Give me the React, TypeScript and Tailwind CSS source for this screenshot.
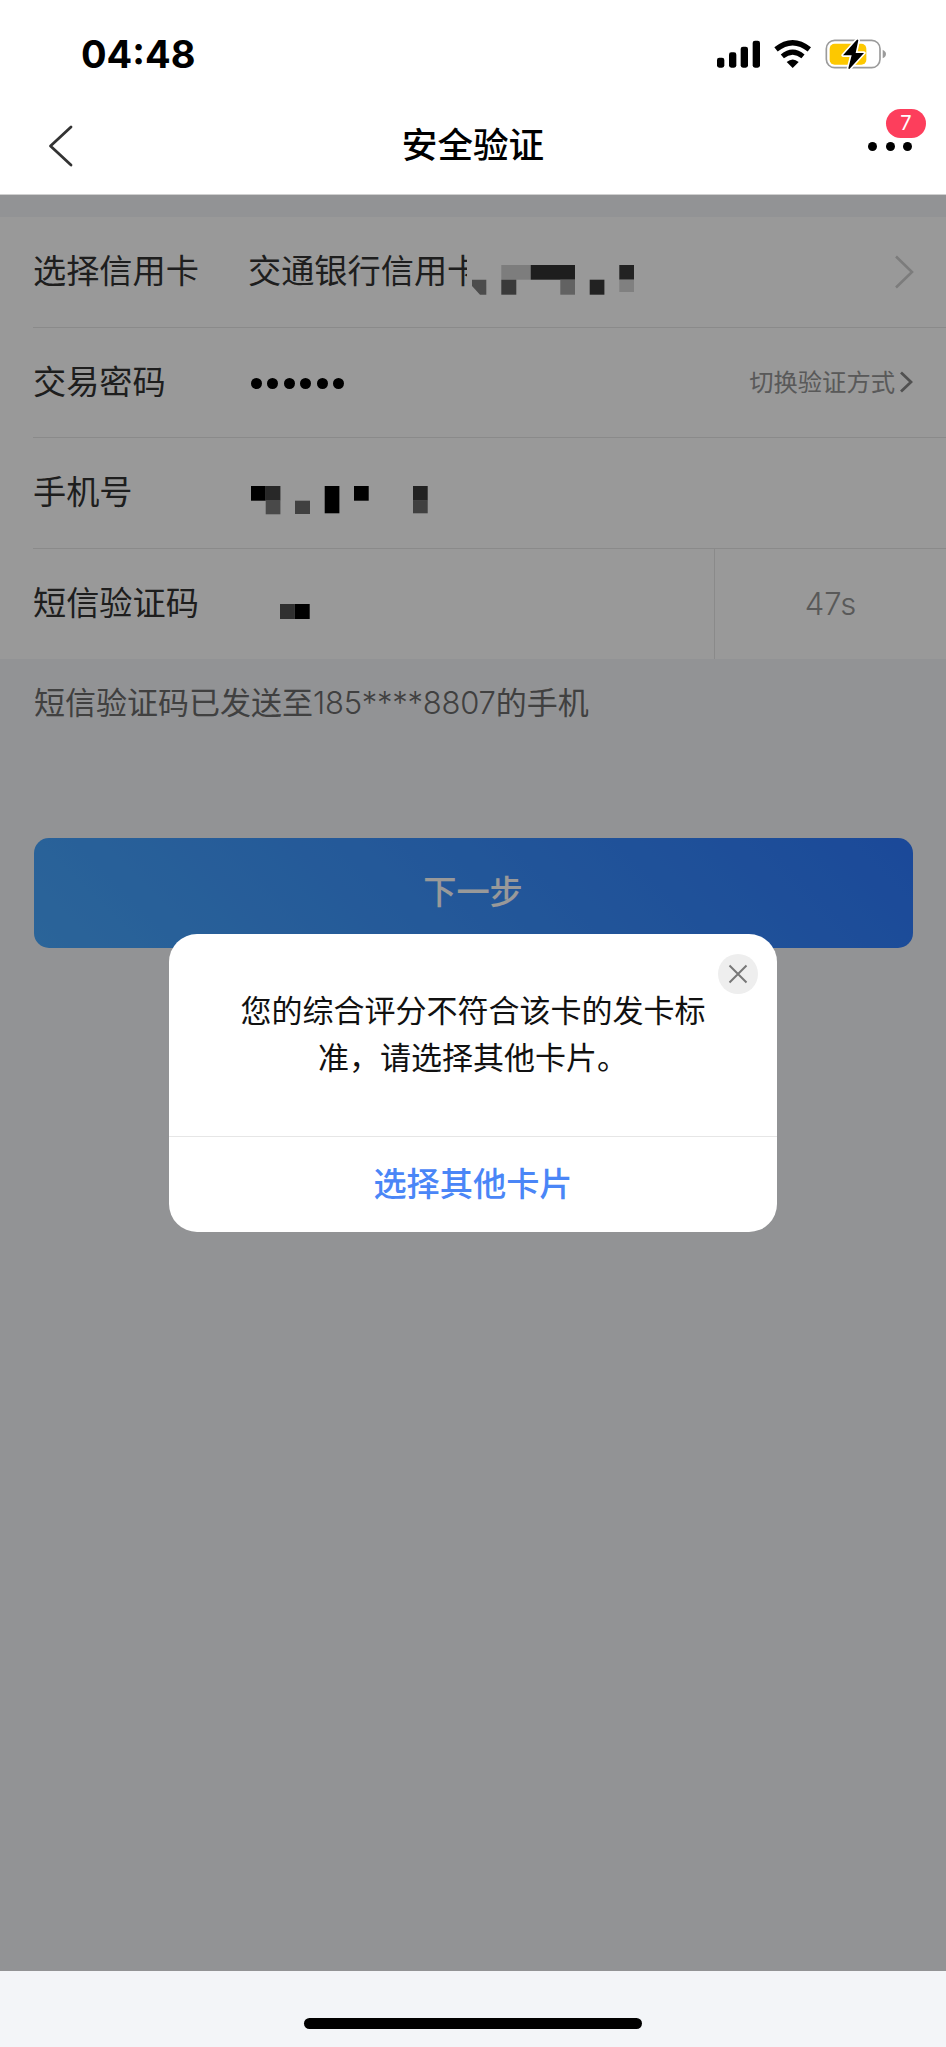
import React from 'react';

interface Cell {
  x: number;
  y: number;
  w: number;
  h: number;
  fill: string;
}

interface RowProps {
  label: string;
  last?: boolean;
  children?: React.ReactNode;
}

// Pixel blocks that hide the private digits of a value
const CARD_CELLS: Cell[] = [
  { x: 29.3, y: 0, w: 29.4, h: 14.7, fill: '#d0d0d0' },
  { x: 58.7, y: 0, w: 44.3, h: 14.7, fill: '#323232' },
  { x: 29.3, y: 14.7, w: 15, h: 15, fill: '#616161' },
  { x: 88.3, y: 14.7, w: 14.7, h: 15, fill: '#a3a3a3' },
  { x: 117.7, y: 14.7, w: 14.7, h: 15, fill: '#393939' },
  { x: 147.3, y: 0, w: 14.7, h: 14.7, fill: '#393939' },
  { x: 147.3, y: 14.7, w: 14.7, h: 12.3, fill: '#d5d5d5' },
];

const PHONE_CELLS: Cell[] = [
  { x: 0, y: 0, w: 14.7, h: 14.7, fill: '#000' },
  { x: 14.7, y: 0, w: 14.7, h: 14.7, fill: '#434343' },
  { x: 14.7, y: 14.7, w: 14.7, h: 13.6, fill: '#7b7b7b' },
  { x: 44, y: 14.7, w: 15, h: 13.3, fill: '#6b6b6b' },
  { x: 73.7, y: 0, w: 14.7, h: 27.3, fill: '#000' },
  { x: 103, y: 0, w: 14.7, h: 14.7, fill: '#000' },
  { x: 162, y: 0, w: 14.7, h: 14.7, fill: '#393939' },
  { x: 162, y: 14.7, w: 14.7, h: 12.6, fill: '#6b6b6b' },
];

const CODE_CELLS: Cell[] = [
  { x: 0, y: 0, w: 14.7, h: 15, fill: '#505050' },
  { x: 14.7, y: 0, w: 15, h: 15, fill: '#000' },
];

const Mosaic: React.FC<{ cells: Cell[]; width: number; height: number; className?: string; children?: React.ReactNode }> = ({
  cells,
  width,
  height,
  className,
  children,
}) => (
  <svg width={width} height={height} viewBox={`0 0 ${width} ${height}`} className={className}>
    {children}
    {cells.map((c, i) => (
      <rect key={i} x={c.x} y={c.y} width={c.w} height={c.h} fill={c.fill} />
    ))}
  </svg>
);

const StatusIcons: React.FC = () => (
  <svg width="170" height="32" viewBox="110 112 510 96">
    {/* Signal */}
    <rect x="110" y="171" width="22" height="30" rx="7" />
    <rect x="146" y="155" width="22" height="46" rx="7" />
    <rect x="181" y="138" width="22" height="63" rx="7" />
    <rect x="217" y="120" width="22" height="81" rx="7" />
    {/* Wifi */}
    <path d="M287 146Q337 106 387 146" fill="none" stroke="#000" strokeWidth="16" />
    <path d="M306 167Q337 142 368 167" fill="none" stroke="#000" strokeWidth="15" />
    <path d="M319 184Q337 169 355 184L337 202Z" />
    {/* Battery */}
    <rect x="438" y="119" width="161" height="82" rx="25" fill="none" stroke="#9b9b9b" strokeWidth="5" />
    <path d="M607 147Q617 152 617 160Q617 168 607 173Z" fill="#9b9b9b" />
    <rect x="448" y="129" width="110" height="63" rx="15" fill="#fdc800" />
    <path
      d="M529 118L488 164H514L504 203Q506 207 510 202L551 157H526L534 119Q532 114 529 118Z"
      stroke="#fff"
      strokeWidth="10"
      paintOrder="stroke"
      strokeLinejoin="round"
    />
  </svg>
);

const Row: React.FC<RowProps> = ({ label, last, children }) => (
  <div className="flex h-[110.5px] pl-[33px]">
    <div className={last ? 'flex flex-1 items-center' : 'flex flex-1 items-center border-b border-[#e6e6e6]'}>
      <span className="w-[216px] shrink-0 text-[33.2px] text-[#333]">{label}</span>
      {children}
    </div>
  </div>
);

const App: React.FC = () => {
  return (
    <div className="flex h-[2047px] w-[946px] flex-col overflow-hidden bg-[#f3f5f8] font-['Inter','Noto_Sans_CJK_SC',sans-serif] leading-none">
      <header className="h-[195px] shrink-0 border-b border-[#d0d0d0] bg-white">
        <div className="flex h-[97px] items-center justify-between pt-[11px] pr-[59px] pl-[81px]">
          <span className="text-[38px] font-bold text-black">04:48</span>
          <StatusIcons />
        </div>
        <div className="flex h-[98px] items-center pr-[33px] pl-[48px]">
          <div className="flex-1">
            <svg width="56" height="42" viewBox="0 0 56 42" fill="none" stroke="#333" strokeWidth="2.8" strokeLinecap="round" strokeLinejoin="round">
              <path d="M23 2L2.5 21L23 40" />
            </svg>
          </div>
          <h1 className="mr-[15px] text-[35.6px] font-medium text-black">安全验证</h1>
          <div className="flex flex-1 justify-end">
            <div className="relative flex w-[45px] items-center gap-[8.5px]">
              <span className="size-[9px] rounded-full bg-black" />
              <span className="size-[9px] rounded-full bg-black" />
              <span className="size-[9px] rounded-full bg-black" />
              <span className="absolute -top-[33px] left-[18px] flex h-[29px] w-10 items-center justify-center rounded-full bg-[#fd3e5c] text-xl text-white">
                7
              </span>
            </div>
          </div>
        </div>
      </header>

      <main className="relative h-[1776px] shrink-0 pt-[22px]">
        <section className="bg-white">
          <Row label="选择信用卡">
            <span className="-ml-px w-[233px] shrink-0 text-[33.2px] whitespace-nowrap text-[#333]">交通银行信用卡</span>
            {/* The white patch runs over the end of the bank name */}
            <Mosaic cells={CARD_CELLS} width={162} height={30} className="relative mt-4 -ml-[9px] overflow-visible">
              <rect x="-5" y="-28" width="20" height="58" fill="#fff" />
              <path d="M0 14.7H14.3V29.7H8L0 21Z" fill="#7f7f7f" />
            </Mosaic>
            <svg width="20" height="34" viewBox="0 0 20 34" className="mr-[32px] ml-auto" fill="none" stroke="#cfcfcf" strokeWidth="2.6">
              <path d="M2 1.5L18 17L2 32.5" />
            </svg>
          </Row>
          <Row label="交易密码">
            <div className="flex gap-[5.5px] pt-[3px] pl-[1.5px]">
              {[0, 1, 2, 3, 4, 5].map((i) => (
                <span key={i} className="size-[11px] rounded-full bg-black" />
              ))}
            </div>
            <div className="mr-[33px] ml-auto flex items-center gap-1 text-[24.3px] text-[#949494]">
              <span>切换验证方式</span>
              <svg width="14" height="22" viewBox="0 0 14 22" fill="none" stroke="#888" strokeWidth="2.8">
                <path d="M2 1.5L12 11L2 20.5" />
              </svg>
            </div>
          </Row>
          <Row label="手机号">
            <Mosaic cells={PHONE_CELLS} width={177} height={30} className="mt-[16px] ml-[1.5px]" />
          </Row>
          <Row label="短信验证码" last>
            <Mosaic cells={CODE_CELLS} width={30} height={15} className="mt-[15px] ml-[31px]" />
            <div className="ml-auto flex h-full w-[232px] items-center justify-center border-l border-[#e6e6e6] text-[31px] font-light text-[#949494]">
              47s
            </div>
          </Row>
        </section>

        <p className="mt-[28px] pl-[34px] text-[31px] leading-[32px] text-[#6b6b6b]">
          短信验证码已发送至<span className="font-light tracking-[-0.25px]">185****8807</span>的手机
        </p>

        <button className="mx-auto mt-[119px] flex h-[110px] w-[879px] items-center justify-center rounded-[15px] bg-[linear-gradient(45deg,#48a8ff,#2d7aff)] text-[33.2px] font-medium text-white">
          下一步
        </button>

        {/* Backdrop and dialog */}
        <div className="absolute inset-0 flex items-center justify-center bg-black/40">
          <div className="relative flex h-[298px] w-[608px] flex-col rounded-[28px] bg-white">
            <button className="absolute top-[20px] right-[19px] flex size-[40px] items-center justify-center rounded-full bg-[#eee]">
              <svg width="20" height="20" viewBox="0 0 20 20" stroke="#777" strokeWidth="2">
                <path d="M1.5 1.5L18.5 18.5M18.5 1.5L1.5 18.5" />
              </svg>
            </button>
            <p className="mx-auto h-[202px] w-[466px] pt-[54px] text-center text-[31px] leading-[46.5px] text-[#111]">
              您的综合评分不符合该卡的发卡标<br />准，请选择其他卡片。
            </p>
            <button className="flex-1 border-t border-[#e6e6e6] text-[33.2px] font-medium text-[#4a86f7]">选择其他卡片</button>
          </div>
        </div>
      </main>

      <footer className="flex flex-1 justify-center pt-[47px]">
        <div className="h-[11px] w-[338px] rounded-full bg-black" />
      </footer>
    </div>
  );
};

export default App;
